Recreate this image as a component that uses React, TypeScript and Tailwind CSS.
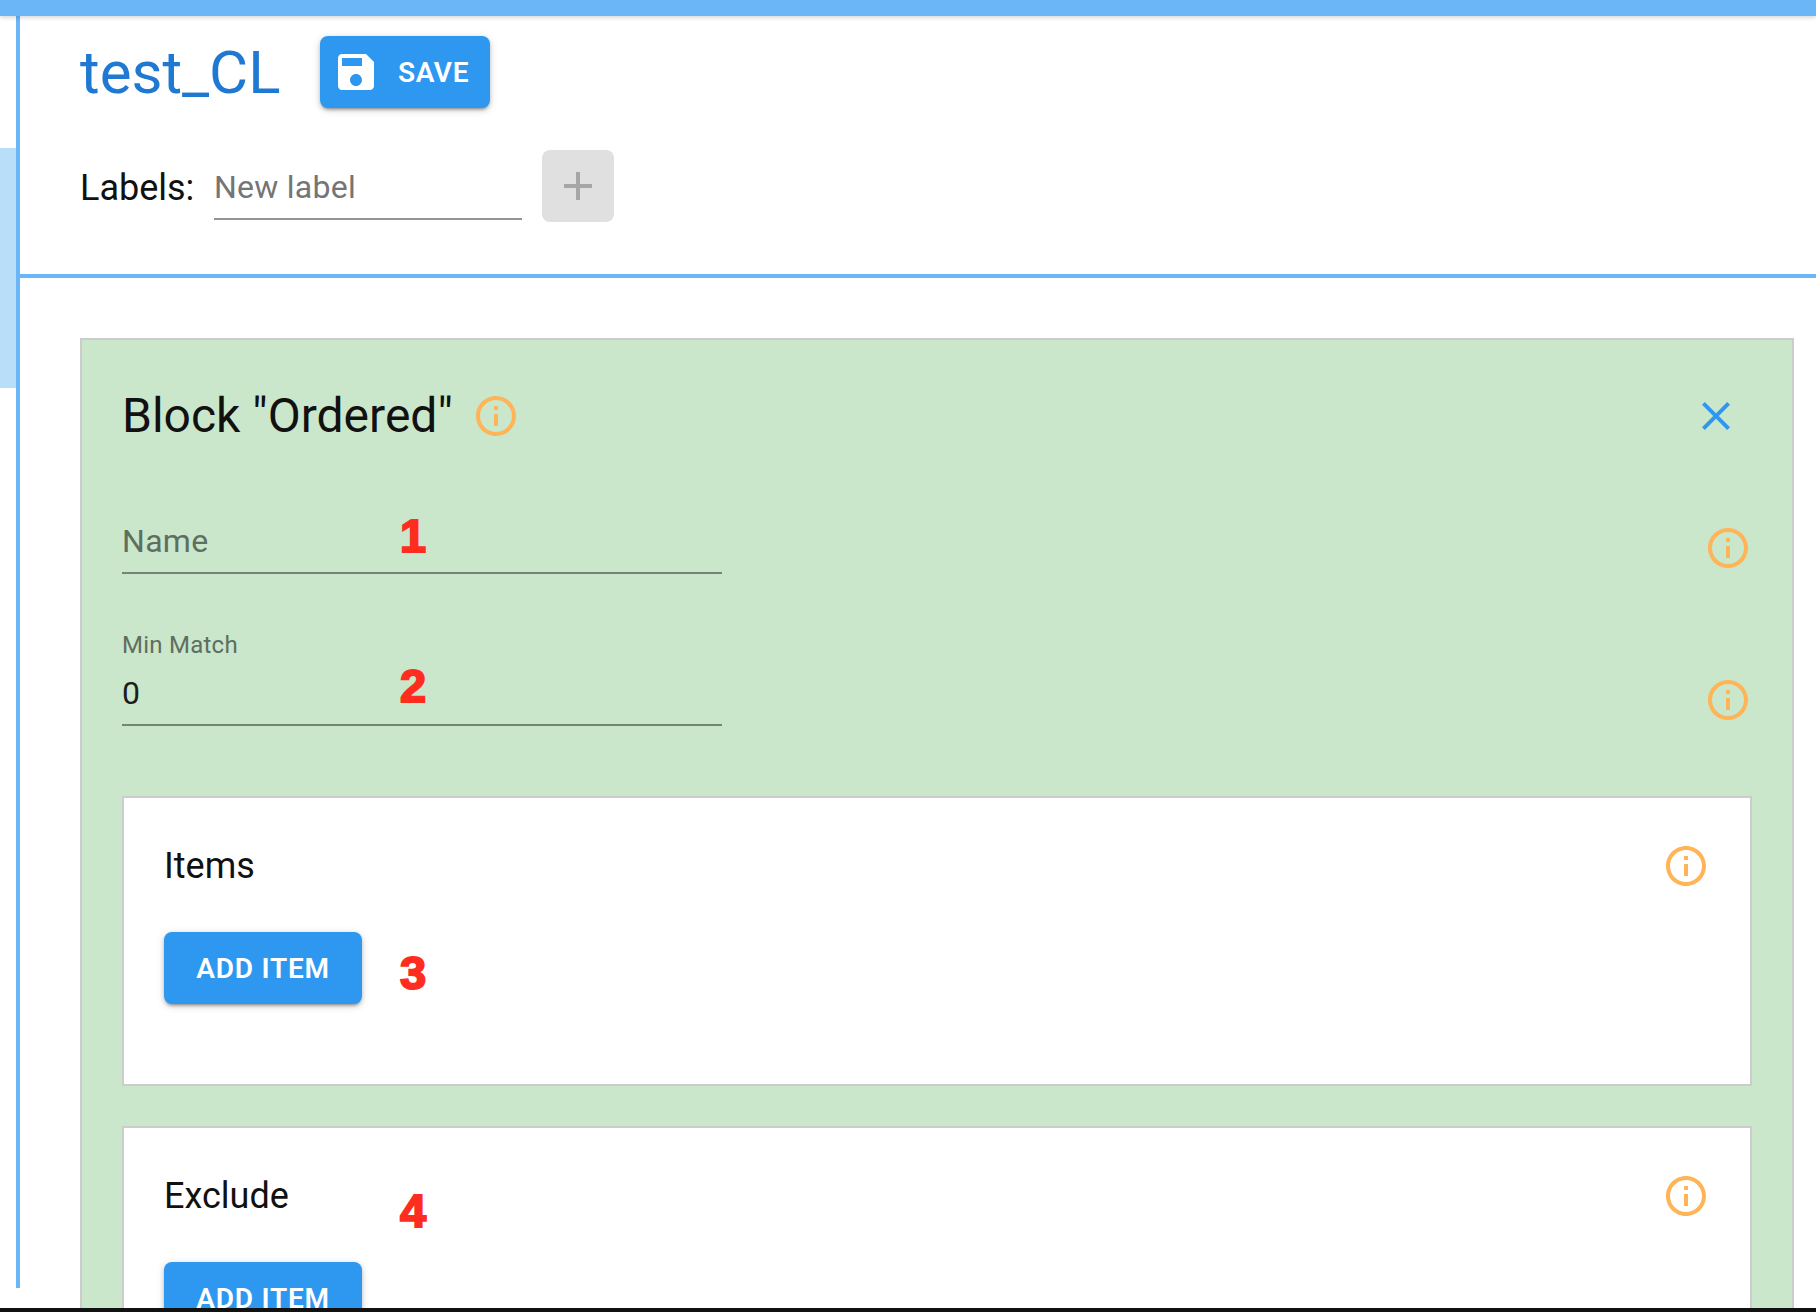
import React from "react";

const roboto = "font-['Roboto',sans-serif]";

function SaveIcon() {
  return (
    <svg viewBox="0 0 24 24" className="w-12 h-12 fill-white shrink-0">
      <path d="M17 3H5c-1.11 0-2 .9-2 2v14c0 1.1.89 2 2 2h14c1.1 0 2-.9 2-2V7l-4-4zm-5 16c-1.66 0-3-1.34-3-3s1.34-3 3-3 3 1.34 3 3-1.34 3-3 3zm3-10H5V5h10v4z" />
    </svg>
  );
}

function InfoIcon() {
  return (
    <svg viewBox="0 0 24 24" className="w-12 h-12 fill-[#ffb457] shrink-0">
      <path d="M11 7h2v2h-2zm0 4h2v6h-2zm1-9C6.48 2 2 6.48 2 12s4.48 10 10 10 10-4.48 10-10S17.52 2 12 2zm0 18c-4.41 0-8-3.59-8-8s3.59-8 8-8 8 3.59 8 8-3.59 8-8 8z" />
    </svg>
  );
}

function Mark({ n, className }: { n: string; className: string }) {
  return (
    <span
      className={`absolute font-['Liberation_Sans',sans-serif] font-bold text-[47px] leading-none text-[#ff2d20] [-webkit-text-stroke:2px_#ff2d20] ${className}`}
    >
      {n}
    </span>
  );
}

function AddButton() {
  return (
    <button className="w-[198px] h-[72px] pt-[2px] rounded-lg bg-[#2e98f0] text-white text-[28px] font-semibold tracking-[0.8px] shadow-[0_3px_3px_-2px_rgba(0,0,0,0.3),0_2px_4px_0_rgba(0,0,0,0.18),0_2px_10px_0_rgba(0,0,0,0.12)] shrink-0">
      ADD ITEM
    </button>
  );
}

function Card({ title, mark }: { title: string; mark: React.ReactNode }) {
  return (
    <section className="relative border-2 border-[#cccccc] bg-white h-[290px] shrink-0 pt-[44px] px-10">
      <div className="flex items-center justify-between h-12">
        <h3 className="text-[36px] leading-[48px] text-[#111111]">{title}</h3>
        <InfoIcon />
      </div>
      <div className="mt-[42px]">
        <AddButton />
      </div>
      {mark}
    </section>
  );
}

export default function App() {
  return (
    <div className={`${roboto} relative h-[1312px] w-full flex flex-col overflow-hidden bg-white`}>
      <div className="h-4 shrink-0 bg-[#6bb6f6] shadow-[0_2px_4px_rgba(0,0,0,0.15)] relative z-10" />
      <div className="flex flex-1 min-h-0 overflow-hidden">
        <aside className="w-4 shrink-0 pt-[132px]">
          <div className="h-[240px] bg-[#b9def9]" />
        </aside>
        <div className="w-1 h-[1272px] shrink-0 bg-[#6bb6f6]" />
        <main className="flex-1 min-w-0 flex flex-col">
          <header className="h-[262px] shrink-0 border-b-4 border-[#6bb6f6] pl-[60px] pt-5">
            <div className="flex items-center h-[72px]">
              <h1 className="text-[60px] leading-[72px] pt-[2px] text-[#1f78d1] w-[240px]">test_CL</h1>
              <button className="flex items-center w-[170px] h-[72px] pl-3 rounded-lg bg-[#2e98f0] text-white text-[28px] font-semibold tracking-[0.6px] shadow-[0_3px_3px_-2px_rgba(0,0,0,0.3),0_2px_4px_0_rgba(0,0,0,0.18),0_2px_10px_0_rgba(0,0,0,0.12)]">
                <SaveIcon />
                <span className="ml-[18px] pt-[2px]">SAVE</span>
              </button>
            </div>
            <div className="flex items-center mt-[42px] h-[72px]">
              <span className="text-[36px] text-[#111111] w-[134px] pt-[3px]">Labels:</span>
              <div className="w-[308px] h-[70px] mt-[-2px] border-b-2 border-[#949494] flex items-center pt-[5px]">
                <span className="text-[32px] tracking-[0.25px] text-[#757575]">New label</span>
              </div>
              <button className="ml-5 w-[72px] h-[72px] rounded-lg bg-[#e0e0e0] flex items-center justify-center">
                <svg viewBox="0 0 24 24" className="w-12 h-12 fill-[#a6a6a6]">
                  <path d="M19 13h-6v6h-2v-6H5v-2h6V5h2v6h6v2z" />
                </svg>
              </button>
            </div>
          </header>

          <section className="ml-[60px] mr-[22px] mt-[60px] border-2 border-b-0 border-[#cccccc] bg-[#cae6cb] pt-[52px] px-10 flex-1 min-h-0 overflow-hidden flex flex-col">
            <div className="flex items-center justify-between h-12 shrink-0">
              <div className="flex items-center">
                <h2 className="text-[48px] leading-[48px] text-[#111111]">Block "Ordered"</h2>
                <span className="ml-[19px] flex"><InfoIcon /></span>
              </div>
              <svg viewBox="0 0 24 24" className="w-12 h-12 fill-[#2e98f0] mr-3">
                <path d="M19 6.41 17.59 5 12 10.59 6.41 5 5 6.41 10.59 12 5 17.59 6.41 19 12 13.41 17.59 19 19 17.59 13.41 12z" />
              </svg>
            </div>

            <div className="relative flex justify-between items-end h-[92px] mt-[42px] shrink-0">
              <div className="w-[600px] h-[92px] border-b-2 border-[#748575] flex items-end pb-[11px]">
                <span className="text-[32px] leading-[40px] tracking-[0.3px] text-[#5e6e5f]">Name</span>
              </div>
              <span className="flex mb-[2px]"><InfoIcon /></span>
              <Mark n="1" className="left-[278px] top-[30px]" />
            </div>

            <div className="relative flex justify-between items-end h-[92px] mt-[60px] shrink-0">
              <div className="w-[600px] h-[92px] border-b-2 border-[#748575] flex flex-col justify-end pb-[11px]">
                <span className="text-[24px] leading-[28px] tracking-[0.25px] text-[#5e6e5f] mb-[14px]">Min Match</span>
                <span className="text-[32px] leading-[40px] text-[#1b1f1b]">0</span>
              </div>
              <span className="flex mb-[2px]"><InfoIcon /></span>
              <Mark n="2" className="left-[278px] top-[28px]" />
            </div>

            <div className="mt-[70px] flex flex-col gap-10 shrink-0">
              <Card title="Items" mark={<Mark n="3" className="left-[276px] top-[151px]" />} />
              <Card title="Exclude" mark={<Mark n="4" className="left-[276px] top-[59px]" />} />
            </div>
          </section>
        </main>
      </div>
      <div className="h-1 shrink-0 bg-[#111111]" />
    </div>
  );
}
